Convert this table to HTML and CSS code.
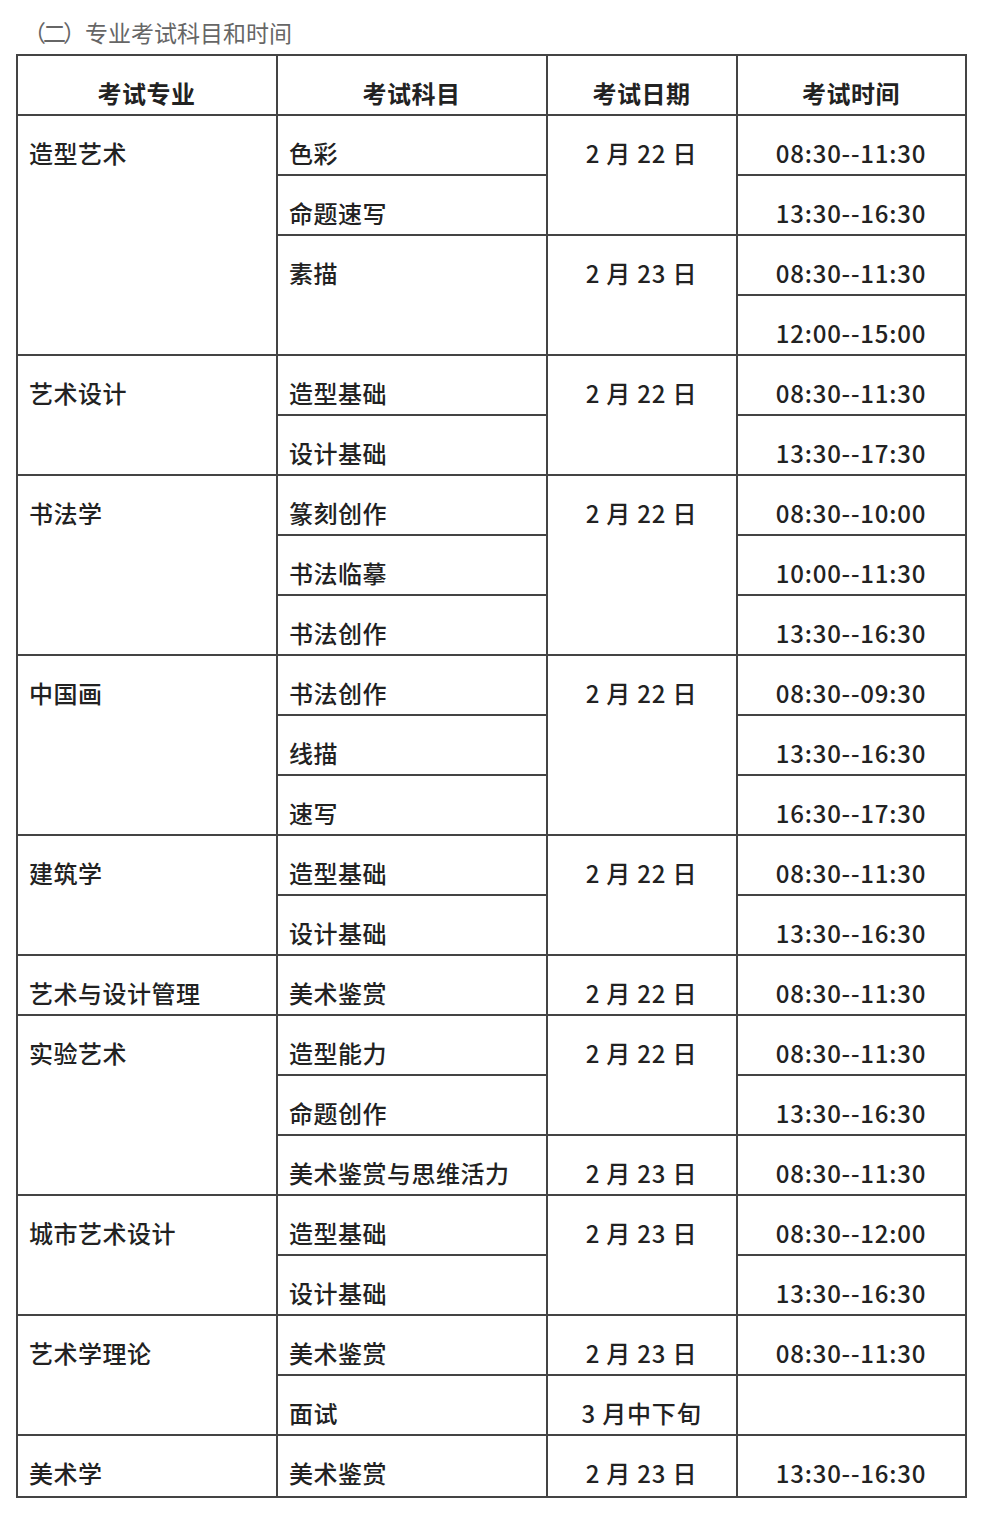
FILE: index.html
```html
<!DOCTYPE html>
<html lang="zh">
<head>
<meta charset="utf-8">
<link rel="stylesheet" href="styles.css">
</head>
<body>
<div class="page">
  <p class="title"><span class="num">（二）</span>专业考试科目和时间</p>
  <table class="exam">
    <colgroup>
      <col class="c1"><col class="c2"><col class="c3"><col class="c4">
    </colgroup>
    <thead>
      <tr><th>考试专业</th><th>考试科目</th><th>考试日期</th><th>考试时间</th></tr>
    </thead>
    <tbody>
      <tr><td rowspan="4">造型艺术</td><td>色彩</td><td class="ctr" rowspan="2">2 月 22 日</td><td class="ctr">08:30--11:30</td></tr>
      <tr><td>命题速写</td><td class="ctr">13:30--16:30</td></tr>
      <tr><td rowspan="2">素描</td><td class="ctr" rowspan="2">2 月 23 日</td><td class="ctr">08:30--11:30</td></tr>
      <tr><td class="ctr">12:00--15:00</td></tr>

      <tr><td rowspan="2">艺术设计</td><td>造型基础</td><td class="ctr" rowspan="2">2 月 22 日</td><td class="ctr">08:30--11:30</td></tr>
      <tr><td>设计基础</td><td class="ctr">13:30--17:30</td></tr>

      <tr><td rowspan="3">书法学</td><td>篆刻创作</td><td class="ctr" rowspan="3">2 月 22 日</td><td class="ctr">08:30--10:00</td></tr>
      <tr><td>书法临摹</td><td class="ctr">10:00--11:30</td></tr>
      <tr><td>书法创作</td><td class="ctr">13:30--16:30</td></tr>

      <tr><td rowspan="3">中国画</td><td>书法创作</td><td class="ctr" rowspan="3">2 月 22 日</td><td class="ctr">08:30--09:30</td></tr>
      <tr><td>线描</td><td class="ctr">13:30--16:30</td></tr>
      <tr><td>速写</td><td class="ctr">16:30--17:30</td></tr>

      <tr><td rowspan="2">建筑学</td><td>造型基础</td><td class="ctr" rowspan="2">2 月 22 日</td><td class="ctr">08:30--11:30</td></tr>
      <tr><td>设计基础</td><td class="ctr">13:30--16:30</td></tr>

      <tr><td>艺术与设计管理</td><td>美术鉴赏</td><td class="ctr">2 月 22 日</td><td class="ctr">08:30--11:30</td></tr>

      <tr><td rowspan="3">实验艺术</td><td>造型能力</td><td class="ctr" rowspan="2">2 月 22 日</td><td class="ctr">08:30--11:30</td></tr>
      <tr><td>命题创作</td><td class="ctr">13:30--16:30</td></tr>
      <tr><td>美术鉴赏与思维活力</td><td class="ctr">2 月 23 日</td><td class="ctr">08:30--11:30</td></tr>

      <tr><td rowspan="2">城市艺术设计</td><td>造型基础</td><td class="ctr" rowspan="2">2 月 23 日</td><td class="ctr">08:30--12:00</td></tr>
      <tr><td>设计基础</td><td class="ctr">13:30--16:30</td></tr>

      <tr><td rowspan="2">艺术学理论</td><td>美术鉴赏</td><td class="ctr">2 月 23 日</td><td class="ctr">08:30--11:30</td></tr>
      <tr><td>面试</td><td class="ctr">3 月中下旬</td><td class="ctr"></td></tr>

      <tr><td>美术学</td><td>美术鉴赏</td><td class="ctr">2 月 23 日</td><td class="ctr">13:30--16:30</td></tr>
    </tbody>
  </table>
</div>
</body>
</html>
```

FILE: styles.css
```css
html, body {
  margin: 0;
  padding: 0;
  background: #ffffff;
}

body {
  font-family: "Noto Sans CJK SC", "Noto Sans", sans-serif;
  color: #222222;
}

.page {
  padding: 0 0 0 16px;
}

.title {
  margin: 0;
  height: 54px;
  padding-top: 17px;
  box-sizing: border-box;
  font-size: 23px;
  line-height: 30px;
  color: #666666;
  margin-left: 7px;
}

.title .num {
  letter-spacing: -3px;
  margin-right: 2px;
}

.exam {
  border-collapse: collapse;
  table-layout: fixed;
  width: 949px;
}

.c1 { width: 260px; }
.c2 { width: 270px; }
.c3 { width: 190px; }
.c4 { width: 229px; }

.exam th,
.exam td {
  border: 2px solid #444444;
  height: 60px;
  box-sizing: border-box;
  padding: 22px 12px 0 11px;
  vertical-align: top;
  font-size: 24px;
  font-weight: 500;
  line-height: 30px;
  text-align: left;
  letter-spacing: 0.5px;
  white-space: nowrap;
}

.exam tbody tr:last-child td {
  height: 62px;
}

.exam th {
  font-weight: bold;
  text-align: center;
  color: #222222;
}

.exam td.ctr {
  text-align: center;
  letter-spacing: 0.8px;
}
```
